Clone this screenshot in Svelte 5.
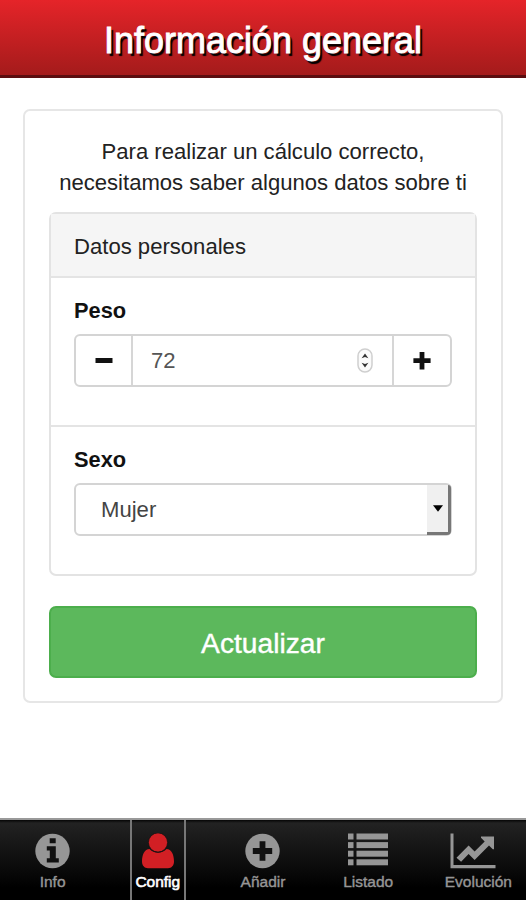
<script>
    let weight = 72;
    let sex = 'Mujer';
    let active = 'config';

    const tabs = [
        { id: 'info', label: 'Info' },
        { id: 'config', label: 'Config' },
        { id: 'add', label: 'Añadir' },
        { id: 'list', label: 'Listado' },
        { id: 'chart', label: 'Evolución' }
    ];
</script>

<div class="app">
    <header>
        <h1>Información general</h1>
    </header>

    <main>
        <section class="card">
            <p>Para realizar un cálculo correcto,<br />necesitamos saber algunos datos sobre ti</p>

            <div class="panel">
                <div class="panel-heading">Datos personales</div>

                <div class="field">
                    <label for="weight">Peso</label>
                    <div class="input-group">
                        <button aria-label="Menos" on:click={() => weight--}>
                            <svg width="18" height="18" viewBox="0 0 18 18"><path d="M0.5 6h17v5h-17z" /></svg>
                        </button>
                        <div class="number">
                            <input id="weight" type="text" bind:value={weight} />
                            <svg width="16" height="26" viewBox="0 0 16 26">
                                <rect x="1" y="1" width="14" height="23" rx="7" fill="#fafafa" stroke="#cfcfcf" stroke-width="1.5" />
                                <path d="M4.6 10.2L8 5.400l3.400 4.800L8 9zM4.600 14.800L8 19.600l3.400-4.800L8 16z" fill="#333" />
                            </svg>
                        </div>
                        <button aria-label="Más" on:click={() => weight++}>
                            <svg width="18" height="18" viewBox="0 0 18 18"><path d="M6.6 0h4.800v6.300h6.200v4.800h-6.200v6.300H6.600v-6.300H0.400V6.300h6.200z" /></svg>
                        </button>
                    </div>
                </div>

                <div class="field">
                    <label for="sex">Sexo</label>
                    <div class="select">
                        <select id="sex" bind:value={sex}>
                            <option>Mujer</option>
                            <option>Hombre</option>
                        </select>
                        <span class="arrow">
                            <svg width="10" height="7" viewBox="0 0 10 7"><path d="M0 0.3h10L5 6.7z" /></svg>
                        </span>
                    </div>
                </div>
            </div>

            <button class="submit">Actualizar</button>
        </section>
    </main>

    <nav>
        {#each tabs as tab}
            <button class="tab {tab.id}" class:active={active === tab.id} on:click={() => (active = tab.id)}>
                {#if tab.id === 'info'}
                    <svg width="35" height="36" viewBox="0 0 35 36">
                        <circle cx="17.5" cy="18" r="17.2" fill="currentColor" />
                        <path d="M14.7 5.3h6v5h-6zM11.8 13.2h9v12h3v4.3H11.8v-4.3h3v-7.8h-3z" fill="#111" />
                    </svg>
                {:else if tab.id === 'config'}
                    <svg width="32" height="36" viewBox="0 0 32 36">
                        <path d="M7.5 16C2.500 16.300 0 21.500 0 28.500 0 32.500 2.500 35.200 6 35.200h20c3.500 0 6-2.700 6-6.700 0-7-2.500-12.200-7.500-12.500C22 18.500 19.300 19.800 16 19.800S10 18.500 7.500 16z" fill="currentColor" />
                        <circle cx="16" cy="9.5" r="9.6" fill="currentColor" stroke="#111" stroke-width="0.8" />
                    </svg>
                {:else if tab.id === 'add'}
                    <svg width="35" height="36" viewBox="0 0 35 36">
                        <circle cx="17.5" cy="18" r="17.2" fill="currentColor" />
                        <path d="M14.6 8.3h5.8v6.8h6.8v5.8h-6.8v6.8h-5.8v-6.8H7.800v-5.800h6.800z" fill="#111" />
                    </svg>
                {:else if tab.id === 'list'}
                    <svg width="40" height="36" viewBox="0 0 40 36">
                        {#each [0, 1, 2, 3] as row}
                            <rect x="0" y={row * 8.6 + 0.5} width="5.5" height="6" fill="currentColor" />
                            <rect x="8.5" y={row * 8.6 + 0.5} width="31.5" height="6" fill="currentColor" />
                        {/each}
                    </svg>
                {:else}
                    <svg width="46" height="36" viewBox="0 0 46 36">
                        <path d="M0.5 0.5h3v31.500h42v3.200H0.500z" fill="currentColor" />
                        <path d="M6.5 24.800L18.600 12.600l6 6L34.700 8.500 31 4.800V3.600h13v12.600h-1.200L39 12.600 24.600 27l-6-6-7.500 7.700z" fill="currentColor" />
                    </svg>
                {/if}
                <span>{tab.label}</span>
            </button>
        {/each}
    </nav>
</div>

<style>
    :global(body) {
        background: #fff;
    }

    .app, .app * {
        box-sizing: border-box;
    }

    .app {
        display: flex;
        flex-direction: column;
        height: 900px;
        font-family: "Liberation Sans", Arial, sans-serif;
        font-size: 22.1px;
        color: #222;
    }

    button, input, select {
        margin: 0;
        padding: 0;
        border: 0;
        font: inherit;
        color: inherit;
        background: none;
        outline: none;
        min-width: 0;
    }

    svg {
        display: block;
        flex: none;
    }

    header {
        display: flex;
        height: 78px;
        padding-top: 6px;
        justify-content: center;
        align-items: center;
        background: linear-gradient(#e52429, #a41b1b);
        border-bottom: 3px solid #5b0d0f;
    }

    h1 {
        margin: 0;
        font-size: 36px;
        font-weight: normal;
        color: #fff;
        -webkit-text-stroke: 0.9px #fff;
        text-shadow: 2.5px 2.5px 1px #000;
    }

    main {
        flex: 1;
        padding: 31px 23px 0;
    }

    .card {
        height: 594px;
        padding: 25px 24px;
        border: 2px solid #e6e6e6;
        border-radius: 7px;
    }

    p {
        margin: 0 0 14px;
        line-height: 31px;
        text-align: center;
    }

    .panel {
        height: 364px;
        border: 2px solid #e3e3e3;
        border-radius: 7px;
    }

    .panel-heading {
        height: 62px;
        padding: 2px 23px 0;
        line-height: 61px;
        background: #f5f5f5;
    }

    .field {
        height: 149px;
        padding: 17px 23px 0;
        border-top: 2px solid #e4e4e4;
    }

    label {
        display: block;
        margin-bottom: 8px;
        font-size: 21.8px;
        font-weight: bold;
        line-height: 31px;
        color: #111;
    }

    .input-group {
        display: grid;
        grid-template-columns: 55px minmax(0, 1fr) 56px;
        height: 53px;
        border: 2px solid #d4d4d4;
        border-radius: 6px;
    }

    .input-group button {
        display: flex;
        align-items: center;
        justify-content: center;
        fill: #111;
    }

    .number {
        display: flex;
        align-items: center;
        padding: 0 19px 0 18px;
        border-left: 2px solid #d6d6d6;
        border-right: 2px solid #d6d6d6;
    }

    .number input {
        flex: 1;
        color: #555;
    }

    .select {
        display: flex;
        height: 53px;
        border: 2px solid #d4d4d4;
        border-radius: 6px;
    }

    select {
        flex: 1;
        padding-left: 25px;
        appearance: none;
        color: #444;
    }

    .arrow {
        display: flex;
        align-items: center;
        justify-content: center;
        width: 24px;
        margin: 0 -1px -1px 0;
        background: #f0f0f0;
        border-right: 3px solid #777;
        border-bottom: 3px solid #777;
        border-radius: 0 3px 4px 0;
    }

    .submit {
        display: block;
        width: 100%;
        height: 72px;
        padding-top: 2px;
        margin-top: 30px;
        font-size: 28.2px;
        color: #fff;
        -webkit-text-stroke: 0.4px #fff;
        background: #5cb85c;
        border: 2px solid #4cae4c;
        border-radius: 7px;
    }

    nav {
        display: grid;
        grid-template-columns: repeat(5, 1fr);
        justify-items: center;
        height: 82px;
        border-top: 2px solid #999;
        background: linear-gradient(#050505 0, #222 3px, #000 85%);
    }

    .tab {
        display: flex;
        flex-direction: column;
        align-items: center;
        padding-top: 13px;
        color: #969696;
    }

    .tab span {
        margin-top: 3px;
        font-size: 15.5px;
        line-height: 20px;
        -webkit-text-stroke: 0.4px currentColor;
    }

    .tab.active {
        width: 56px;
        border: 2px solid #777;
        border-width: 0 2px;
        color: #d21f24;
    }

    .tab.active span {
        color: #fff;
        -webkit-text-stroke-width: 0.6px;
    }

    .tab.chart {
        align-items: flex-start;
        margin-left: 10px;
    }

    .tab.chart svg {
        margin-left: 5px;
    }
</style>
